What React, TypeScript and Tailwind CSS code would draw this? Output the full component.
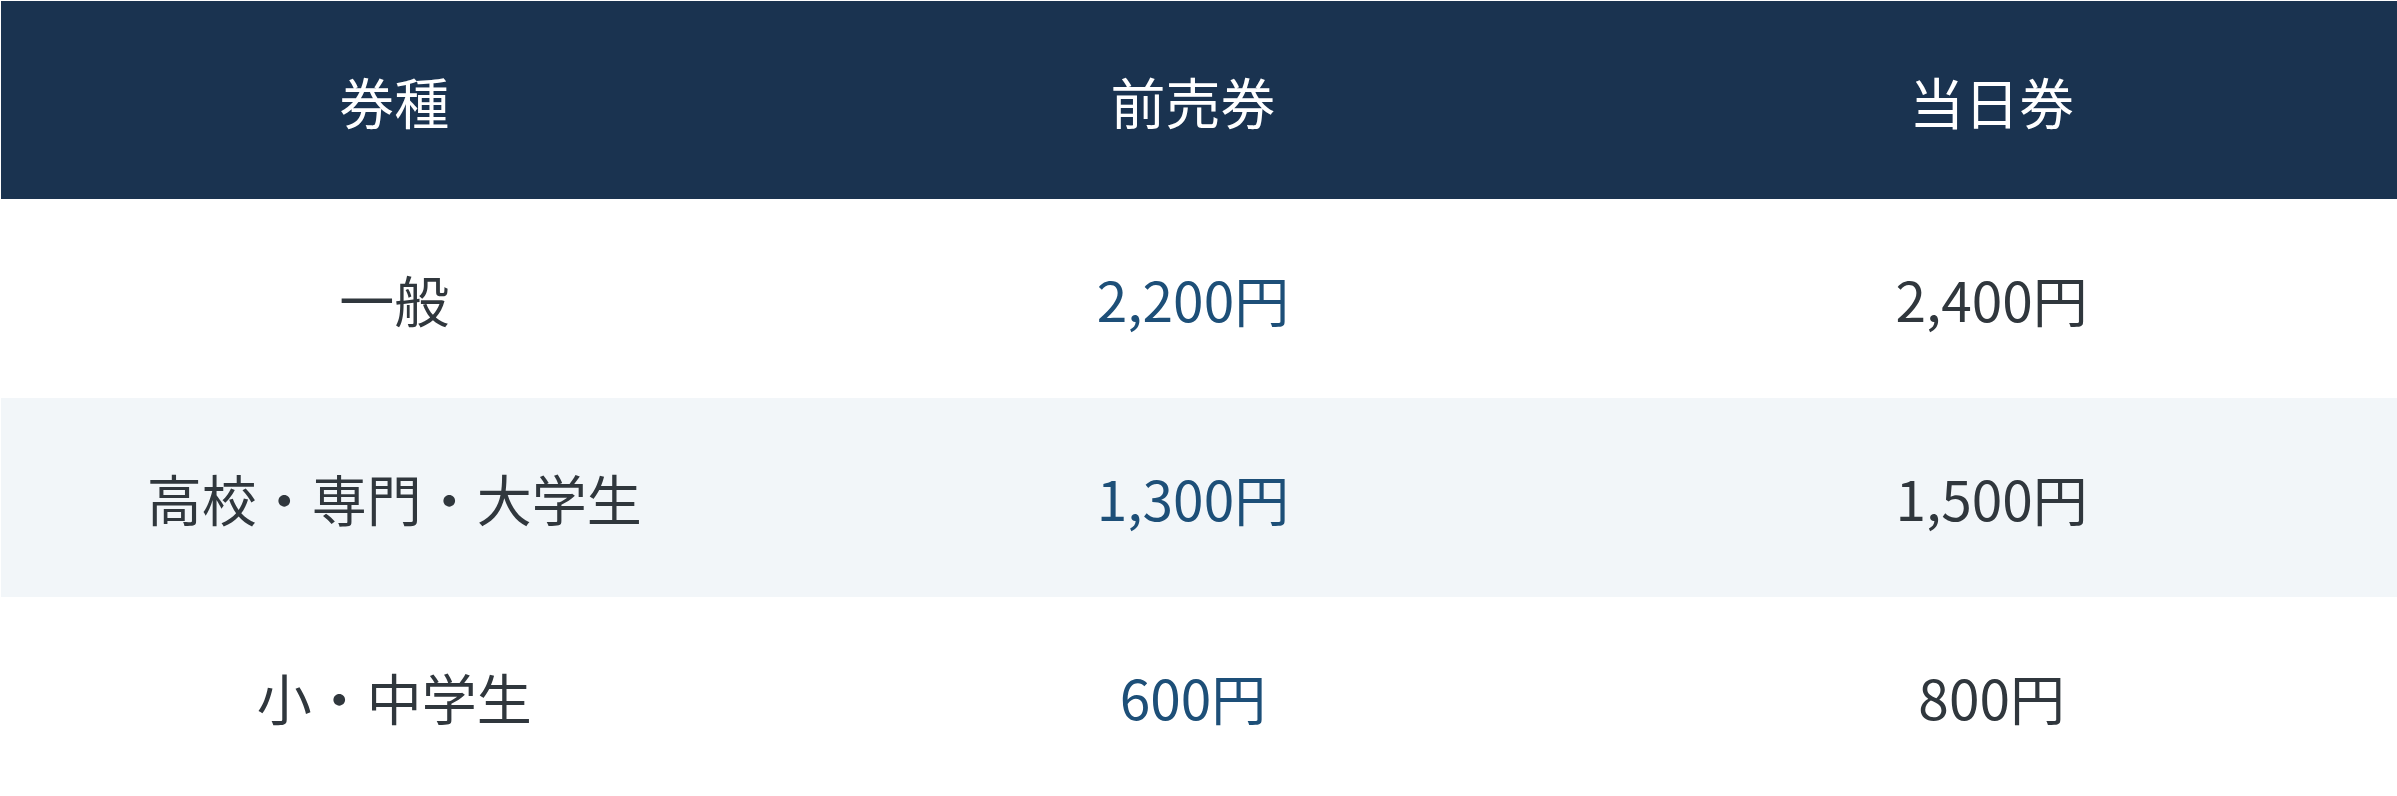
const rows = [
  { kind: "一般", advance: "2,200円", door: "2,400円" },
  { kind: "高校・専門・大学生", advance: "1,300円", door: "1,500円" },
  { kind: "小・中学生", advance: "600円", door: "800円" },
];

export default function App() {
  return (
    <div className="w-full bg-white pl-px pt-px font-['Noto_Sans_CJK_JP','Noto_Sans',sans-serif] text-[55px] leading-none">
      <table className="w-full table-fixed border-collapse">
        <thead>
          <tr className="h-[198px] bg-[#1a3350] text-white">
            <th className="pr-3 font-normal">券種</th>
            <th className="pr-3 font-normal">前売券</th>
            <th className="pr-3 font-normal">当日券</th>
          </tr>
        </thead>
        <tbody>
          {rows.map((row, i) => (
            <tr
              key={row.kind}
              className={i % 2 === 1 ? "h-[199px] bg-[#f2f6f9]" : "h-[199px] bg-white"}
            >
              <td className="pr-3 text-center text-[#30373d]">{row.kind}</td>
              <td className="pr-3 text-center text-[#1d4f78]">{row.advance}</td>
              <td className="pr-3 text-center text-[#30373d]">{row.door}</td>
            </tr>
          ))}
        </tbody>
      </table>
    </div>
  );
}
